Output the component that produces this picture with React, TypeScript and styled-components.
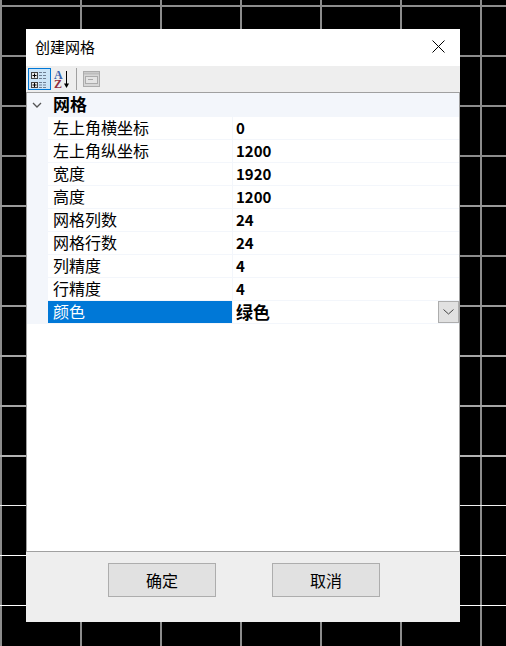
import React from "react";
import styled, { createGlobalStyle } from "styled-components";

/* The canvas grid behind the dialog: lines fade from thick grey to thin white going down. */
const canvasLines: [number, number, string][] = [
  [5, 2, "#8c8c8c"],
  [55, 2, "#8c8c8c"],
  [105, 2, "#8c8c8c"],
  [155, 2, "#8c8c8c"],
  [205, 2, "#999999"],
  [255, 2, "#8c8c8c"],
  [305, 2, "#999999"],
  [355, 2, "#a6a6a6"],
  [405, 2, "#a6a6a6"],
  [455, 2, "#b3b3b3"],
  [505, 1, "#f0f0f0"],
  [555, 1, "#ffffff"],
  [605, 1, "#ffffff"],
];

const horizontalStops = canvasLines
  .map(([y, h, c]) => `transparent ${y}px, ${c} ${y}px, ${c} ${y + h}px, transparent ${y + h}px`)
  .join(", ");

const Global = createGlobalStyle`
  html, body { margin: 0; padding: 0; height: 100%; }
  body {
    background-color: #000;
    background-image:
      linear-gradient(to bottom, ${horizontalStops}),
      linear-gradient(to right, #8c8c8c 0, #8c8c8c 2px, transparent 2px),
      linear-gradient(to right, #4a4a4a 0, #4a4a4a 2px, transparent 2px);
    background-size: 100% 646px, 80px 100%, 2px 100%;
    background-position: 0 0, 80px 0, 0 0;
    background-repeat: no-repeat, repeat-x, no-repeat;
    overflow: hidden;
    font-family: "Noto Sans CJK SC", "Noto Sans", sans-serif;
  }
  #root { height: 100%; }
`;

const Stage = styled.div`
  box-sizing: border-box;
  width: 506px;
  height: 646px;
  padding: 29px 46px 24px 26px;
`;

const Dialog = styled.div`
  width: 434px;
  height: 593px;
  background: #fff;
  display: flex;
  flex-direction: column;
`;

const TitleBar = styled.div`
  height: 37px;
  flex: none;
  box-sizing: border-box;
  display: flex;
  align-items: center;
  justify-content: space-between;
  padding: 0 15px 2px 9px;
`;

const Title = styled.span`
  font-size: 15px;
  color: #000;
  line-height: 35px;
`;

const Toolbar = styled.div`
  height: 26px;
  flex: none;
  box-sizing: border-box;
  background: #eeeeee;
  display: flex;
  align-items: center;
  padding-left: 2px;
`;

const ToolButton = styled.div<{ $active?: boolean }>`
  box-sizing: border-box;
  width: ${(p) => (p.$active ? 23 : 22)}px;
  height: 22px;
  display: flex;
  align-items: center;
  justify-content: center;
  background: ${(p) => (p.$active ? "#cce4f7" : "transparent")};
  border: ${(p) => (p.$active ? "1px solid #0078d7" : "none")};
`;

const ToolSeparator = styled.div`
  width: 1px;
  height: 22px;
  background: #a0a0a0;
  margin: 0 4px 0 3px;
`;

const Grid = styled.div`
  flex: 1;
  box-sizing: border-box;
  border-top: 1px solid #a0a0a0;
  border-left: 1px solid #a0a0a0;
  border-right: 1px solid #a0a0a0;
  background: #fff;
  min-height: 0;
`;

const GroupRow = styled.div`
  height: 24px;
  background: #f3f6fb;
  display: flex;
  align-items: center;
`;

const Chevron = styled.div`
  width: 21px;
  display: flex;
  justify-content: center;
  padding-right: 1px;
  box-sizing: border-box;
`;

const GroupLabel = styled.span`
  margin: 0 0 2px 5px;
  font-size: 17px;
  font-weight: 700;
  color: #000;
  line-height: 22px;
`;

const Row = styled.div`
  height: 23px;
  display: flex;
  background: #f3f6fb;
`;

const Name = styled.div<{ $selected?: boolean }>`
  box-sizing: border-box;
  margin-left: 21px;
  width: 184px;
  height: 22px;
  padding-left: 5px;
  font-size: 16px;
  line-height: 20px;
  color: ${(p) => (p.$selected ? "#fff" : "#000")};
  background: ${(p) => (p.$selected ? "#0078d7" : "#fff")};
`;

const Value = styled.div`
  flex: 1;
  box-sizing: border-box;
  margin-left: 1px;
  height: 22px;
  padding-left: 3px;
  font-size: 15px;
  font-weight: 700;
  line-height: 22px;
  color: #000;
  background: #fff;
  display: flex;
  justify-content: space-between;
`;

const ChineseValue = styled.span`
  font-size: 17px;
  line-height: 22px;
`;

const DropButton = styled.div`
  box-sizing: border-box;
  width: 21px;
  height: 22px;
  background: #e1e1e1;
  border: 1px solid #adadad;
  display: flex;
  align-items: center;
  justify-content: center;
`;

const Footer = styled.div`
  height: 71px;
  flex: none;
  box-sizing: border-box;
  background: #eeeeee;
  border-top: 1px solid #a0a0a0;
  display: flex;
  gap: 56px;
  padding: 11px 0 0 82px;
`;

const Button = styled.div`
  box-sizing: border-box;
  width: 108px;
  height: 34px;
  background: #e1e1e1;
  border: 1px solid #adadad;
  font-size: 16px;
  line-height: 32px;
  text-align: center;
  color: #000;
`;

const props: [string, string][] = [
  ["左上角横坐标", "0"],
  ["左上角纵坐标", "1200"],
  ["宽度", "1920"],
  ["高度", "1200"],
  ["网格列数", "24"],
  ["网格行数", "24"],
  ["列精度", "4"],
  ["行精度", "4"],
];

const CloseIcon = () => (
  <svg width="13" height="13" viewBox="0 0 13 13">
    <path d="M0.5 0.5L12.5 12.5M12.5 0.5L0.5 12.5" stroke="#000" strokeWidth="1" fill="none" />
  </svg>
);

const CategorizedIcon = () => (
  <svg width="21" height="20" viewBox="0 0 21 20">
    <rect x="2.5" y="3.5" width="6" height="6" fill="#e8e8e8" stroke="#444" />
    <path d="M3.5 6.5h4M5.5 4.5v4" stroke="#000" />
    <rect x="2.5" y="13.5" width="6" height="5" fill="#e8e8e8" stroke="#444" />
    <path d="M3.5 16h4M5.5 14v4" stroke="#000" />
    <path d="M10 3.5h8M10 6.5h8M10 9.5h8" stroke="#6f7f94" strokeDasharray="3 1" />
    <path d="M10 13.5h8M10 16h8M10 18.5h8" stroke="#6f7f94" strokeDasharray="3 1" />
  </svg>
);

const SortIcon = () => (
  <svg width="22" height="22" viewBox="0 0 22 22">
    <text x="3" y="11" fontFamily="Liberation Serif, serif" fontWeight="700" fontSize="12" fill="#3a62ad">A</text>
    <text x="3" y="20" fontFamily="Liberation Serif, serif" fontWeight="700" fontSize="12" fill="#8f2f3f">Z</text>
    <path d="M15.5 3V16" stroke="#000" strokeWidth="1" />
    <path d="M13 15.5h5L15.5 20z" fill="#000" />
  </svg>
);

const PagesIcon = () => (
  <svg width="18" height="17" viewBox="0 0 18 17">
    <rect x="0.5" y="0.5" width="16" height="15" fill="#d6d6d6" stroke="#ababab" />
    <path d="M1 2.5h15" stroke="#bdbdbd" strokeWidth="2" />
    <rect x="2.5" y="5.5" width="12" height="7" fill="#e4e4e4" stroke="#ababab" />
    <path d="M5 8.5h5" stroke="#a8a8a8" />
  </svg>
);

const GroupChevron = () => (
  <svg width="10" height="6" viewBox="0 0 10 6">
    <path d="M1 1L5 5L9 1" stroke="#555" strokeWidth="1.3" fill="none" />
  </svg>
);

const DropChevron = () => (
  <svg width="11" height="6" viewBox="0 0 11 6">
    <path d="M0.5 0.5L5.5 5L10.5 0.5" stroke="#444" strokeWidth="1" fill="none" />
  </svg>
);

export default function App() {
  return (
    <Stage>
      <Global />
      <Dialog>
        <TitleBar>
          <Title>创建网格</Title>
          <CloseIcon />
        </TitleBar>
        <Toolbar>
          <ToolButton $active>
            <CategorizedIcon />
          </ToolButton>
          <ToolButton>
            <SortIcon />
          </ToolButton>
          <ToolSeparator />
          <ToolButton>
            <PagesIcon />
          </ToolButton>
        </Toolbar>
        <Grid>
          <GroupRow>
            <Chevron>
              <GroupChevron />
            </Chevron>
            <GroupLabel>网格</GroupLabel>
          </GroupRow>
          {props.map(([k, v]) => (
            <Row key={k}>
              <Name>{k}</Name>
              <Value>{v}</Value>
            </Row>
          ))}
          <Row>
            <Name $selected>颜色</Name>
            <Value>
              <ChineseValue>绿色</ChineseValue>
              <DropButton>
                <DropChevron />
              </DropButton>
            </Value>
          </Row>
        </Grid>
        <Footer>
          <Button>确定</Button>
          <Button>取消</Button>
        </Footer>
      </Dialog>
    </Stage>
  );
}
